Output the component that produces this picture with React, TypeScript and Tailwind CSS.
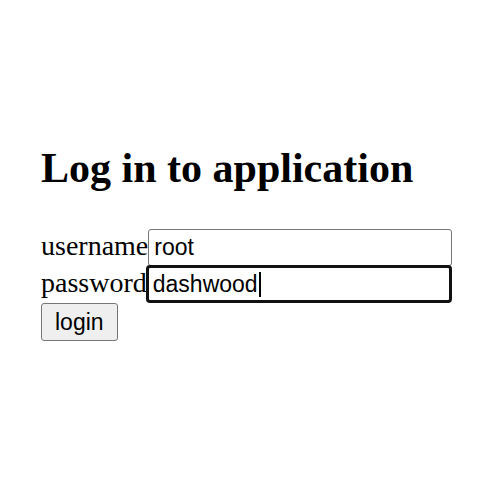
import React from 'react';

const Field = ({ label, value, focused }: { label: string; value: string; focused?: boolean }) => {
  return (
    <div className="flex items-baseline h-[37px]">
      <span className="text-[28px] leading-[37px]">{label}</span>
      <div
        className={
          focused
            ? 'w-[306px] h-[38px] -ml-[1px] rounded-[4px] border-[3px] border-[#111111] bg-white px-[4px] font-["Liberation_Sans",Arial,sans-serif] text-[23px] leading-[32px] flex items-center'
            : 'w-[304px] h-[37px] rounded-[3px] border border-[#767676] bg-white px-[5px] font-["Liberation_Sans",Arial,sans-serif] text-[23px] leading-[35px] flex items-center'
        }
      >
        <span>{value}</span>
        {focused && <span className="inline-block w-[2px] h-[25px] bg-black ml-[1px]" />}
      </div>
    </div>
  );
};

const App = () => {
  return (
    <div className="min-h-[500px] bg-white text-black pl-[41px] pt-[144px] font-['Liberation_Serif','Times_New_Roman',serif]">
      <h2 className="text-[42px] font-bold leading-[48px] mb-[35px]">Log in to application</h2>
      <form>
        <Field label="username" value="root" />
        <Field label="password" value="dashwood" focused />
        <button
          type="button"
          className="mt-[2px] h-[38px] px-[13px] rounded-[3px] border border-[#767676] bg-[#efefef] font-['Liberation_Sans',Arial,sans-serif] text-[23px] leading-[34px]"
        >
          login
        </button>
      </form>
    </div>
  );
};

export default App;
